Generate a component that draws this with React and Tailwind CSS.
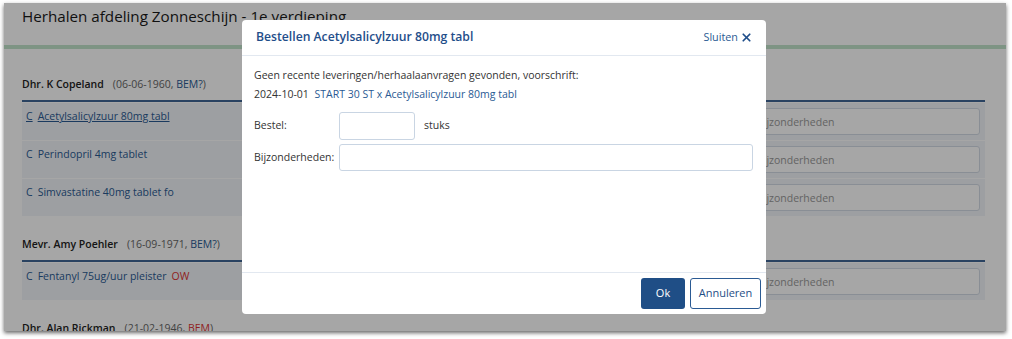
import { X } from "lucide-react";

const patients = [
  {
    name: "Dhr. K Copeland",
    born: "06-06-1960",
    bem: "BEM?",
    bemRed: false,
    meds: [
      { name: "Acetylsalicylzuur 80mg tabl", link: true },
      { name: "Perindopril 4mg tablet" },
      { name: "Simvastatine 40mg tablet fo" },
    ],
  },
  {
    name: "Mevr. Amy Poehler",
    born: "16-09-1971",
    bem: "BEM?",
    bemRed: false,
    meds: [{ name: "Fentanyl 75ug/uur pleister", ow: true }],
  },
  {
    name: "Dhr. Alan Rickman",
    born: "21-02-1946",
    bem: "BEM",
    bemRed: true,
    meds: [],
  },
];

export default function App() {
  return (
    <div
      className="w-[1012px] h-[339px] bg-white pt-[3px] pl-[4px]"
      style={{ fontFamily: '"Open Sans", "Liberation Sans", sans-serif' }}
    >
      <div className="relative w-[1002px] h-[328px] overflow-hidden bg-white shadow-[0_2px_4px_rgba(0,0,0,0.6)]">
        {/* page under the overlay */}
        <div className="h-[42px] pl-[18px] pt-[2px]">
          <h1 className="text-[15.2px] leading-[22px] text-[#1a1a1a]">
            Herhalen afdeling Zonneschijn - 1e verdieping
          </h1>
        </div>
        <div className="h-[4px] bg-[#c2e3cb]" />

        <div className="pl-[18px] pr-[21px] pt-[7px]">
          {patients.map((p) => (
            <Patient key={p.name} p={p} />
          ))}
        </div>

        <div className="absolute inset-0 bg-black/35" />

        {/* modal */}
        <div className="absolute left-[238px] top-[17px] w-[524px] h-[294px] bg-white rounded-[4px] flex flex-col text-[#333]">
          <div className="h-[36px] flex items-center justify-between pl-[14px] pr-[13px] border-b border-[#e2e8f0]">
            <h2 className="text-[12.2px] font-semibold text-[#1f4e8a]">
              Bestellen Acetylsalicylzuur 80mg tabl
            </h2>
            <button className="flex items-center gap-[2px] text-[10.8px] text-[#2a5a93]">
              Sluiten
              <X size={13} strokeWidth={3.2} className="text-[#1f4e8a]" />
            </button>
          </div>

          <div className="flex-1 pl-[12px] pr-[13px] pt-[10px] text-[10.5px]">
            <p className="leading-[19px]">
              Geen recente leveringen/herhaalaanvragen gevonden, voorschrift:
            </p>
            <p className="leading-[19px]">
              2024-10-01{" "}
              <span className="ml-[3px] text-[#2a5a93]">
                START 30 ST x Acetylsalicylzuur 80mg tabl
              </span>
            </p>

            <div className="flex items-center mt-[8px]">
              <label className="w-[85px]">Bestel:</label>
              <input className="w-[76px] h-[28px] border border-[#c9d5e3] rounded-[3px]" />
              <span className="ml-[9px]">stuks</span>
            </div>
            <div className="flex items-center mt-[4px]">
              <label className="w-[85px]">Bijzonderheden:</label>
              <input className="flex-1 h-[27px] border border-[#c9d5e3] rounded-[3px]" />
            </div>
          </div>

          <div className="h-[42px] border-t border-[#e2e8f0] flex items-start justify-end gap-[5px] pt-[5px] pr-[5px]">
            <button className="w-[44px] h-[31px] rounded-[3px] bg-[#1f4e86] text-white text-[11px]">
              Ok
            </button>
            <button className="w-[71px] h-[31px] rounded-[3px] border border-[#2a5a93] text-[#1f4e86] text-[11px]">
              Annuleren
            </button>
          </div>
        </div>
      </div>
    </div>
  );
}

function Patient({ p }) {
  return (
    <div className="pt-[20px]">
      <div className="text-[10.5px] leading-[16px] pb-[8px] border-b-2 border-[#3f6696]">
        <span className="font-semibold text-[#222]">{p.name}</span>
        <span className="ml-[9px] text-[#666]">
          ({p.born},{" "}
          <span className={p.bemRed ? "text-[#d33]" : "text-[#2a5a93]"}>
            {p.bem}
          </span>
          )
        </span>
      </div>
      {p.meds.map((m) => (
        <div
          key={m.name}
          className="h-[37px] mt-px bg-[#f2f5f9] flex items-start pl-[4px] pr-[5px] pt-[5px]"
        >
          <div className="text-[10.5px] leading-[16px] text-[#2a5a93] flex gap-[5px]">
            <span className={m.link ? "underline" : ""}>C</span>
            <span className={m.link ? "underline" : ""}>{m.name}</span>
            {m.ow && <span className="text-[#d33]">OW</span>}
          </div>
          <input
            placeholder="Bijzonderheden"
            className="ml-auto w-[232px] h-[27px] bg-white border border-[#d3dbe5] rounded-[3px] px-[8px] text-[10.5px] placeholder:text-[#999]"
          />
        </div>
      ))}
    </div>
  );
}
